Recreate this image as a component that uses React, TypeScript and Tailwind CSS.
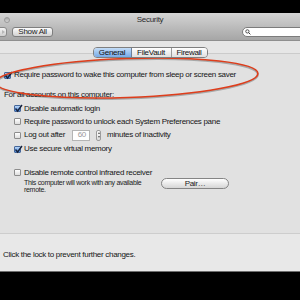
import React from "react";

function Check({ on }: { on?: boolean }) {
  if (on) {
    return (
      <span className="relative w-[7px] h-[7px] shrink-0 rounded-[1px] border border-[#46679a] bg-gradient-to-b from-[#b9d6f6] to-[#4d8be0]">
        <svg viewBox="0 0 9 9" className="absolute -left-[1px] -top-[2px] w-[9px] h-[9px]">
          <path d="M1.5 4.5 L3.6 7 L8 1" stroke="#17233d" strokeWidth="1.4" fill="none" />
        </svg>
      </span>
    );
  }
  return (
    <span className="w-[7px] h-[7px] shrink-0 rounded-[1px] border border-[#8d8d8d] bg-gradient-to-b from-white to-[#dedede]" />
  );
}

function Row({ on, children, h = "h-[13px]" }: { on?: boolean; children: React.ReactNode; h?: string }) {
  return (
    <div className={`flex items-center gap-[3px] ${h}`}>
      <Check on={on} />
      <span className="whitespace-nowrap">{children}</span>
    </div>
  );
}

export default function App() {
  return (
    <div className="w-[300px] h-[300px] bg-black overflow-hidden font-['Liberation_Sans',Arial,sans-serif] text-[8px] tracking-[-0.3px] text-[#161616]">
      <div className="h-[13px]" />

      {/* window */}
      <div className="relative h-[259px] flex flex-col bg-[#e2e2e2] border-b border-[#6e6e6e]">
        {/* toolbar */}
        <div className="h-[28px] shrink-0 bg-gradient-to-b from-[#d4d4d4] to-[#a6a6a6] border-b border-[#8f8f8f]">
          <div className="grid grid-cols-[1fr_auto_1fr] items-center h-[11px] mt-[1px]">
            <span className="ml-[4px] w-[6px] h-[6px] rounded-full bg-gradient-to-b from-[#a9a9a9] to-[#d6d6d6] border border-[#9a9a9a]" />
            <span className="text-[#2a2a2a]">Security</span>
            <span />
          </div>
          <div className="flex items-center mt-[1px] h-[11px]">
            <div className="-ml-[20px] w-[27px] h-[10px] rounded-[3px] border border-[#8a8a8a] bg-gradient-to-b from-[#f4f4f4] to-[#cfcfcf] flex items-center justify-end pr-[1px]">
              <span className="w-0 h-0 border-y-[2px] border-y-transparent border-l-[3px] border-l-[#b8b8b8]" />
            </div>
            <div className="ml-[5px] w-[41px] h-[10px] rounded-[3px] border border-[#7e7e7e] bg-gradient-to-b from-[#fbfbfb] to-[#d2d2d2] flex items-center justify-center text-[#1c1c1c]">
              Show All
            </div>
            <div className="ml-auto -mr-[20px] w-[78px] h-[10px] rounded-full border border-[#7c7c7c] bg-white flex items-center pl-[2px]">
              <svg viewBox="0 0 8 8" className="w-[6px] h-[6px]">
                <circle cx="3.2" cy="3.2" r="2.2" stroke="#333" strokeWidth="1.1" fill="none" />
                <path d="M4.8 4.8 L7.2 7.2" stroke="#333" strokeWidth="1.3" />
              </svg>
            </div>
          </div>
        </div>

        {/* content */}
        <div className="flex-1 flex flex-col bg-[#e6e6e6]">
          <div className="relative z-10 flex justify-center pt-[6px]">
            <div className="flex h-[11px] rounded-[4px] border border-[#7f7f7f] overflow-hidden text-[#111]">
              <div className="w-[38px] flex items-center justify-center bg-gradient-to-b from-[#c3dcf7] to-[#76aae8] border-r border-[#6d7f99]">
                General
              </div>
              <div className="w-[40px] flex items-center justify-center bg-gradient-to-b from-white to-[#e0e0e0] border-r border-[#9a9a9a]">
                FileVault
              </div>
              <div className="w-[35px] flex items-center justify-center bg-gradient-to-b from-white to-[#e0e0e0]">
                Firewall
              </div>
            </div>
          </div>

          <div className="flex-1 -mt-[5px] border-t border-[#cbcbcb] bg-[#e1e1e1] pl-[4px] pt-[14px]">
            <Row on h="h-[14px]">Require password to wake this computer from sleep or screen saver</Row>
            <div className="mt-[6px] h-[14px] flex items-center pl-[-1px]">For all accounts on this computer:</div>
            <div className="pl-[10px]">
              <Row on>Disable automatic login</Row>
              <Row>Require password to unlock each System Preferences pane</Row>
              <div className="flex items-center gap-[3px] h-[14px]">
                <Check />
                <span>Log out after</span>
                <div className="ml-[4px] w-[18px] h-[11px] border border-[#b4b4b4] bg-white flex items-center justify-end pr-[3px] text-[#9a9a9a]">
                  60
                </div>
                <div className="ml-[3px] w-[5px] h-[11px] rounded-[2px] border border-[#9c9c9c] bg-gradient-to-b from-white to-[#dcdcdc] flex flex-col items-center justify-center gap-[2px]">
                  <span className="w-0 h-0 border-x-[1.5px] border-x-transparent border-b-[2px] border-b-[#555]" />
                  <span className="w-0 h-0 border-x-[1.5px] border-x-transparent border-t-[2px] border-t-[#555]" />
                </div>
                <span className="ml-[3px]">minutes of inactivity</span>
              </div>
              <Row on h="h-[14px]">Use secure virtual memory</Row>

              <div className="mt-[10px]">
                <Row>Disable remote control infrared receiver</Row>
              </div>
              <div className="flex items-start">
                <p className="ml-[10px] w-[126px] text-[7px] leading-[7px] text-[#222]">
                  This computer will work with any available remote.
                </p>
                <div className="-mt-[1px] ml-[11px] w-[68px] h-[11px] rounded-full border border-[#858585] bg-gradient-to-b from-white to-[#d6d6d6] flex items-center justify-center text-[#222]">
                  Pair…
                </div>
              </div>
            </div>
          </div>

          <div className="h-[38px] shrink-0 border-t border-[#cdcdcd] bg-[#e8e8e8] flex items-center pl-[3px] pt-[5px]">
            Click the lock to prevent further changes.
          </div>
        </div>
      </div>

      {/* red annotation circle */}
      <svg className="absolute left-0 top-0 w-[300px] h-[300px] pointer-events-none" viewBox="0 0 300 300">
        <ellipse cx="127" cy="79" rx="131" ry="19.5" transform="rotate(-2 127 79)" fill="none" stroke="rgba(0,0,0,0.25)" strokeWidth="2" />
        <ellipse cx="127" cy="78" rx="131" ry="19.5" transform="rotate(-2 127 78)" fill="none" stroke="#de3d1b" strokeWidth="1.6" />
      </svg>
    </div>
  );
}
